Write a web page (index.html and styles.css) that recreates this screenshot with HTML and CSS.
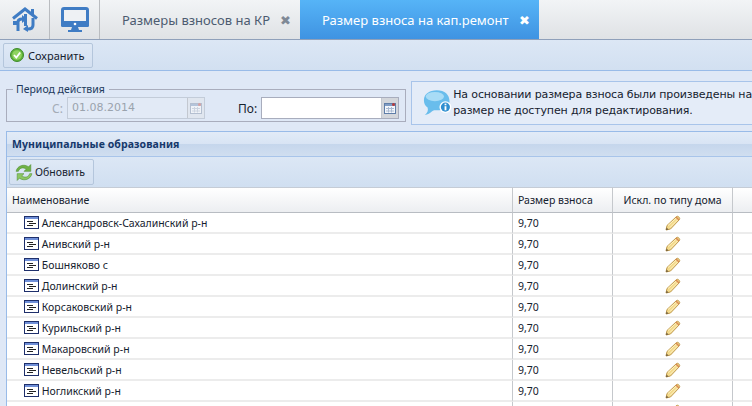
FILE: index.html
```html
<!DOCTYPE html>
<html lang="ru">
<head>
  <meta charset="UTF-8" />
  <title>Размер взноса на кап.ремонт</title>
  <link rel="stylesheet" href="styles.css">
</head>
<body>

  <header class="topbar">
    <div class="home-cell">
      <svg width="26" height="25" viewBox="0 0 26 25">
        <rect x="19" y="2" width="3" height="6" fill="#3f7cc4"/>
        <path d="M1 11.500 L13 2 L25 11.500" fill="none" stroke="#3f7cc4" stroke-width="3"/>
        <path d="M6 24 V15 C6 13 8 12 10 12" fill="none" stroke="#3f7cc4" stroke-width="3"/>
        <path d="M10 8 L15 12 L10 16 Z M1 14 H5 V18 H1 Z" fill="#3f7cc4"/>
        <path d="M21 11 V18 C21 21 19 22 16 22" fill="none" stroke="#3f7cc4" stroke-width="3"/>
        <path d="M16 18 L11 22 L16 25 Z" fill="#3f7cc4"/>
        <path d="M12 7 H15 V19 H12 Z" fill="#3f7cc4"/>
      </svg>
    </div>
    <div class="home-cell">
      <svg width="28" height="26" viewBox="0 0 28 26">
        <rect x="1.5" y="1.5" width="25" height="17" rx="1.5" fill="#fff" stroke="#3f7cc4" stroke-width="3"/>
        <rect x="3" y="3" width="22" height="12" fill="#eef1f4"/>
        <rect x="0" y="14" width="28" height="6" rx="1.5" fill="#3f7cc4"/>
        <circle cx="14" cy="17" r="1.3" fill="#fff"/>
        <path d="M11 20 H17 L18 23 H21 V25 H7 V23 H10 Z" fill="#3f7cc4"/>
      </svg>
    </div>
    <div class="tab">Размеры взносов на КР <span class="tab-close">✖</span></div>
    <div class="tab tab-active">Размер взноса на кап.ремонт <span class="tab-close">✖</span></div>
  </header>

  <div class="toolbar main-toolbar">
    <button class="btn">
      <svg width="14" height="14" viewBox="0 0 14 14">
        <circle cx="7" cy="7" r="6.5" fill="#5fb33a" stroke="#3f8a2c"/>
        <circle cx="7" cy="7" r="4.8" fill="#8fd35f"/>
        <path d="M4 7 L6.3 9.5 L10.2 4.5" fill="none" stroke="#fff" stroke-width="1.8"/>
      </svg>
      Сохранить
    </button>
  </div>

  <section class="form-row">
    <fieldset class="period">
      <legend>Период действия</legend>
      <label class="field-label field-label-off">С:</label>
      <div class="date-field date-field-off">
        <span class="date-value">01.08.2014</span>
        <span class="date-trigger">
          <svg width="12" height="12" viewBox="0 0 12 12">
            <rect x=".5" y="1.500" width="11" height="10" fill="#f0f3f8" stroke="#b4bfd0"/>
            <rect x="1" y="2" width="10" height="2" fill="#b4c4da"/>
            <path d="M2 6.500 H10 M2 9 H10 M4.500 5 V10.500 M7.500 5 V10.500" stroke="#ccd4e0" fill="none"/>
            <circle cx="9.500" cy="2.500" r="1.500" fill="#d8a0a0"/>
          </svg>
        </span>
      </div>
      <label class="field-label field-label-to">По:</label>
      <div class="date-field date-field-to">
        <span class="date-value"></span>
        <span class="date-trigger">
          <svg width="12" height="12" viewBox="0 0 12 12">
            <rect x=".5" y="1.500" width="11" height="10" fill="#f3f6fb" stroke="#5f7ea8"/>
            <rect x="1" y="2" width="10" height="2" fill="#7f9cc4"/>
            <path d="M2 6.500 H10 M2 9 H10 M4.500 5 V10.500 M7.500 5 V10.500" stroke="#a9bad2" fill="none"/>
            <circle cx="9.500" cy="2.500" r="1.500" fill="#b83a3a"/>
          </svg>
        </span>
      </div>
    </fieldset>
    <div class="notice">
      <svg width="30" height="28" viewBox="0 0 32 30">
        <path d="M15 1 C24 1 29 6 29 13 C29 19 23 23 15 23 C13 23 11 23 10 24 C8 26 5 28 2 28 C5 26 6 23 5 20 C2 18 1 15 1 12 C1 5 7 1 15 1 Z" fill="#69bdec"/>
        <ellipse cx="13" cy="8" rx="10" ry="5" fill="#a8dcf6"/>
        <circle cx="24.5" cy="19.5" r="6.5" fill="#fff"/>
        <circle cx="24.5" cy="19.5" r="5" fill="#2f8fd0"/>
        <rect x="23.6" y="18.5" width="2" height="4.5" fill="#fff"/>
        <rect x="23.6" y="15.7" width="2" height="1.8" fill="#fff"/>
      </svg>
      <p>На основании размера взноса были произведены на<br>размер не доступен для редактирования.</p>
    </div>
  </section>

  <section class="panel">
    <h2 class="panel-title">Муниципальные образования</h2>
    <div class="toolbar panel-toolbar">
      <button class="btn btn-refresh">
        <svg width="18" height="17" viewBox="1.500 .5 15 15">
          <path d="M2 7 C3 2 9 0 13 3 L15 1 V7 H9 L11 5 C8 3 5 4 4 7 Z" fill="#6fb246" stroke="#4f8f32" stroke-width=".5"/>
          <path d="M16 9 C15 14 9 16 5 13 L3 15 V9 H9 L7 11 C10 13 13 12 14 9 Z" fill="#8cc763" stroke="#4f8f32" stroke-width=".5"/>
        </svg>
        Обновить
      </button>
    </div>
    <table class="grid">
      <thead>
        <tr>
          <th class="col-name">Наименование</th>
          <th class="col-size">Размер взноса</th>
          <th class="col-excl">Искл. по типу дома</th>
          <th></th>
        </tr>
      </thead>
      <tbody id="rows"></tbody>
    </table>
  </section>

  <script>
    const names = ["Александровск-Сахалинский р-н", "Анивский р-н", "Бошняково с", "Долинский р-н",
      "Корсаковский р-н", "Курильский р-н", "Макаровский р-н", "Невельский р-н", "Ногликский р-н"];
    const tableBody = document.getElementById("rows");

    const pencil = `
      <svg width="16" height="16" viewBox="0 0 16 16">
        <path d="M1 15 L2 10.500 L11.500 1.500 C13 .5 15.500 3 14.500 4.500 L5.500 14 Z" fill="#f3d98a" stroke="#c09a4e"/>
        <path d="M3 10.500 L12 2.500 M5 12.500 L13.500 4" stroke="#fff3c4" fill="none"/>
        <path d="M1 15 L1.600 12.500 L3.500 14.400 Z" fill="#6b5a3c"/>
        <path d="M11 2 L14 5" stroke="#d98a52" stroke-width="1.500"/>
      </svg>`;

    names.forEach(name => {
      const row = document.createElement("tr");
      row.innerHTML = `
        <td class="cell-name">
          <svg width="15" height="13" viewBox="0 0 15 13">
            <rect x=".5" y=".5" width="14" height="12" fill="#fff" stroke="#1e2f6b"/>
            <rect x="1" y="1" width="13" height="2" fill="#6f8fd8"/>
            <path d="M3 5.5 H9 M5 7.5 H12 M3 9.5 H9" stroke="#222" fill="none"/>
          </svg>
          ${name}
        </td>
        <td>9,70</td>
        <td class="cell-edit">${pencil}</td>
        <td></td>
      `;
      tableBody.appendChild(row);
    });

    // the next row only just shows at the bottom edge: its pencil tip
    const lastRow = document.createElement("tr");
    lastRow.innerHTML = `<td></td><td></td><td class="cell-edit">${pencil}</td><td></td>`;
    tableBody.appendChild(lastRow);
  </script>

</body>
</html>
```

FILE: styles.css
```css
html, body {
  height: 100%;
}

body {
  font-family: 'Noto Sans', sans-serif;
  font-size: 10.5px;
  color: #15212e;
  background-color: #dfe8f6;
  margin: 0;
  padding: 0;
  overflow: hidden;
}

.topbar {
  display: flex;
  height: 39px;
  background: linear-gradient(#f2f4f6, #dfe2e5);
  border-bottom: 1px solid #8fa0ba;
}

.home-cell {
  width: 49px;
  display: flex;
  align-items: center;
  justify-content: center;
  border-right: 1px solid #b9bcc0;
}

.tab {
  width: 200px;
  box-sizing: border-box;
  display: flex;
  align-items: center;
  gap: 10px;
  padding-left: 22px;
  font-size: 13px;
  color: #4c5b70;
  white-space: nowrap;
}

.tab-close {
  font-size: 13px;
  color: #7f8996;
}

.tab-active {
  width: 239px;
  background: linear-gradient(#56b4f7, #3f93e2);
  color: #fff;
}

.tab-active .tab-close {
  color: #fff;
}

.toolbar {
  display: flex;
  align-items: center;
  box-sizing: border-box;
}

.main-toolbar {
  height: 31px;
  padding-left: 3px;
  background: linear-gradient(#dce7f5, #d2e0f1);
  border-bottom: 1px solid #99bbe8;
}

.btn {
  display: flex;
  align-items: center;
  gap: 4px;
  box-sizing: border-box;
  height: 25px;
  width: 90px;
  padding: 0 0 0 6px;
  font-family: inherit;
  font-size: 11px;
  color: #15212e;
  background: linear-gradient(#dfe9f6, #d3e0f1);
  border: 1px solid #b4c6dc;
  border-radius: 2px;
}

.form-row {
  display: flex;
  gap: 5px;
  height: 60px;
  padding-left: 6px;
  box-sizing: border-box;
}

.period {
  display: flex;
  flex-shrink: 0;
  align-items: center;
  box-sizing: border-box;
  width: 400px;
  height: 38px;
  margin: 13px 0 0;
  padding: 0;
  border: 1px solid #a9adbd;
}

.period legend {
  margin-left: 6px;
  padding: 0 4px 0 3px;
  line-height: 11px;
  color: #223a5c;
}

.field-label {
  width: 15px;
  margin-left: 45px;
  font-size: 12px;
}

.field-label-off {
  color: #a4acb6;
}

.field-label-to {
  width: 20px;
  margin-left: 33px;
  color: #15212e;
}

.date-field {
  display: flex;
  box-sizing: border-box;
  height: 22px;
  width: 138px;
  background: #fff;
  border: 1px solid #a8adbd;
}

.date-field-to {
  margin-left: 3px;
}

.date-field-off {
  background: #e2eaf6;
  border-color: #c3ccd9;
}

.date-value {
  flex: 1;
  padding-left: 4px;
  line-height: 20px;
  font-family: 'DejaVu Sans', sans-serif;
  font-size: 11px;
  color: #9aa3ad;
}

.date-trigger {
  width: 16px;
  display: flex;
  align-items: center;
  justify-content: center;
  background: #d3d6db;
  border-left: 1px solid #c3c8d0;
}

.date-field-off .date-trigger {
  background: #e0e6ef;
}

.notice {
  flex: 1;
  min-width: 0;
  display: flex;
  align-items: center;
  gap: 1px;
  box-sizing: border-box;
  height: 44px;
  margin-top: 10px;
  padding-left: 11px;
  background: #e4ecf8;
  border: 1px solid #a8c4ea;
  border-right: 0;
  white-space: nowrap;
}

.notice p {
  margin: 0;
  font-family: 'DejaVu Sans', sans-serif;
  font-size: 11px;
  line-height: 16px;
  letter-spacing: -.15px;
}

.panel {
  margin-left: 6px;
  background: #fff;
  border-left: 1px solid #99bbe8;
  border-top: 1px solid #99bbe8;
}

.panel-title {
  margin: 0;
  box-sizing: border-box;
  height: 25px;
  padding-left: 5px;
  font-size: 10.5px;
  line-height: 24px;
  letter-spacing: .1px;
  color: #15386b;
  background: linear-gradient(#e2ebf7 0, #d8e4f4 50%, #c5d6ec 50%, #d0def0 100%);
  border-bottom: 1px solid #a8c4ea;
}

.panel-toolbar {
  height: 30px;
  padding-left: 2px;
  background: linear-gradient(#dce7f5, #d0dff1);
}

.btn-refresh {
  width: 85px;
  height: 26px;
  padding-left: 5px;
  gap: 2px;
  font-size: 10.5px;
}

table.grid {
  width: 100%;
  border-collapse: separate;
  border-spacing: 0;
  table-layout: fixed;
}

.grid th {
  height: 26px;
  box-sizing: border-box;
  padding: 0 5px;
  font-weight: normal;
  text-align: left;
  background: linear-gradient(#ffffff, #eceef1);
  border-top: 1px solid #c5ccd6;
  border-bottom: 1px solid #b8bcc2;
  border-right: 1px solid #c5c8cc;
}

.grid td {
  height: 21px;
  box-sizing: border-box;
  padding: 0 5px;
  border-bottom: 2px solid #ececec;
  border-right: 1px solid #c5c8cc;
}

.col-name {
  width: 506px;
}

.col-size {
  width: 100px;
}

.grid th.col-excl {
  width: 120px;
  text-align: center;
}

.grid th:last-child, .grid td:last-child {
  border-right: 0;
}

.cell-name svg {
  margin: 0 0 0 12px;
  vertical-align: -2px;
}

.cell-edit {
  text-align: center;
}

.cell-edit svg {
  display: block;
  margin: 0 auto;
}
```
